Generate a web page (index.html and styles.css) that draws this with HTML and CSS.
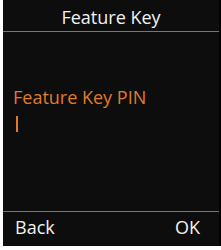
FILE: index.html
```html
<!DOCTYPE html>
<html lang="en">
<head>
  <meta charset="UTF-8">
  <title>Feature Key</title>
  <link rel="stylesheet" href="styles.css">
</head>
<body>
  <div class="screen">
    <div class="title">Feature Key</div>
    <div class="content">
      <div class="label">Feature Key PIN</div>
      <div class="cursor"></div>
    </div>
    <div class="softkeys">
      <span>Back</span>
      <span>OK</span>
    </div>
  </div>
</body>
</html>
```

FILE: styles.css
```css
* {
  box-sizing: border-box;
  margin: 0;
  padding: 0;
}

body {
  background: #fff;
  font-family: 'Open Sans', sans-serif;
}

.screen {
  margin-left: 3px;
  width: 218px;
  height: 246px;
  background: #0d0d0d;
  border-right: 2px solid #000;
  display: flex;
  flex-direction: column;
}

.title {
  height: 32px;
  padding-top: 2px;
  border-bottom: 1px solid #4f7fae;
  color: #f2f2f2;
  font-size: 18px;
  line-height: 30px;
  text-align: center;
}

.content {
  flex: 1;
  padding: 53px 0 0 10px;
}

.label {
  color: #e07b29;
  font-size: 18px;
  line-height: 24px;
}

.cursor {
  width: 2px;
  height: 16px;
  margin: 7px 0 0 3px;
  background: #e07b29;
}

.softkeys {
  height: 35px;
  border-top: 1px solid #4f7fae;
  display: flex;
  justify-content: space-between;
  padding: 2px 19px 0 12px;
  color: #f2f2f2;
  font-size: 18px;
  line-height: 26px;
}
```
